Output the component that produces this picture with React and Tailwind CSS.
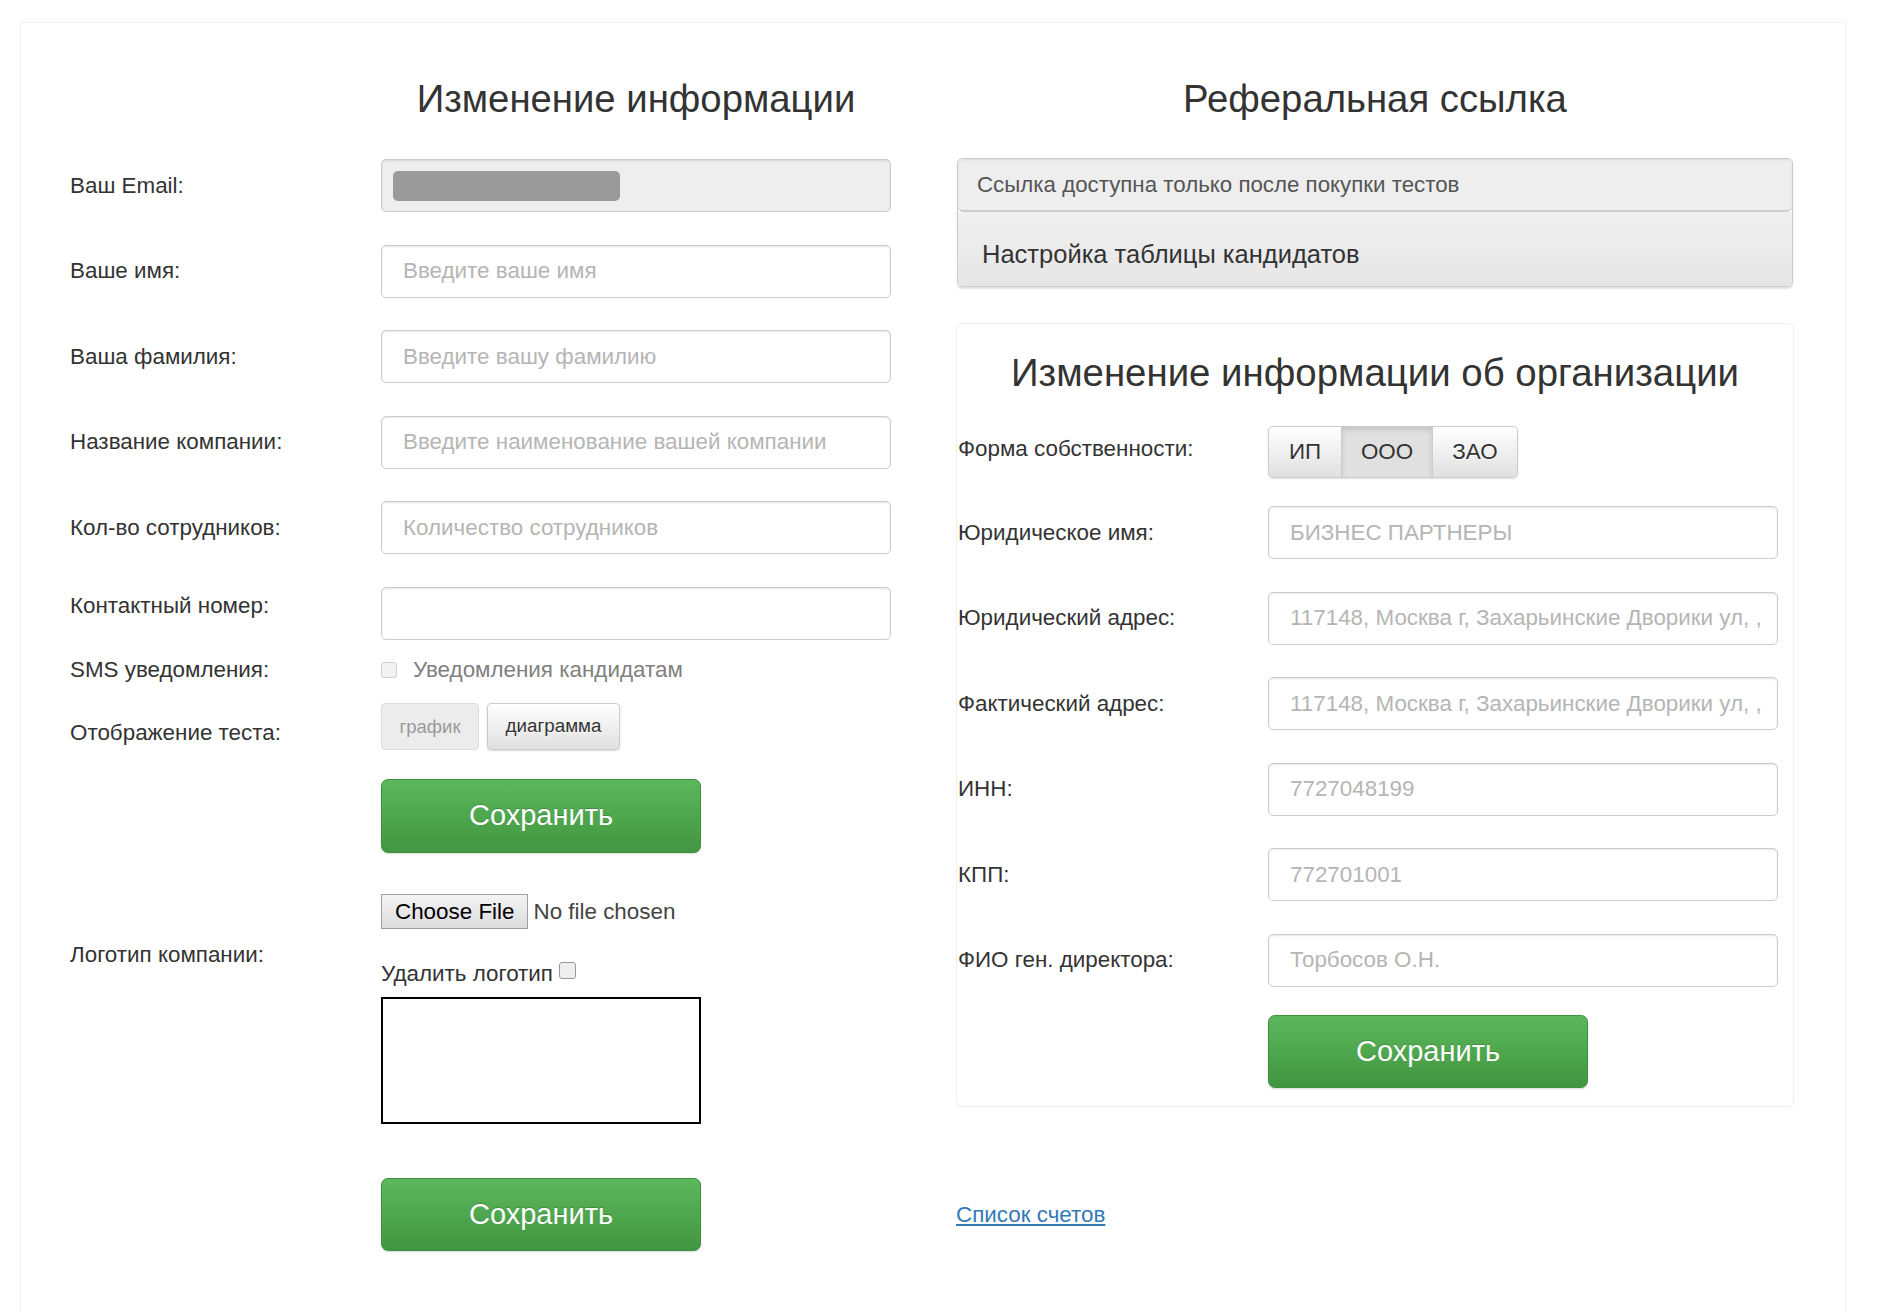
import React from "react";

const Field = ({ text, w = "w-[510px]", bg = "bg-white", children }) => (
  <div
    className={`${w} h-[53px] ${bg} border border-[#ccc] rounded-[5px] shadow-[inset_0_1px_2px_rgba(0,0,0,0.1)] flex items-center px-[21px] overflow-hidden whitespace-nowrap text-[22.4px] text-[#b5b5b5]`}
  >
    {children ?? text}
  </div>
);

const Row = ({ label, labelW = "w-[311px]", labelClass = "", children }) => (
  <div className="flex items-center h-[53px]">
    <div className={`${labelW} shrink-0 text-[22.4px] text-[#333] ${labelClass}`}>{label}</div>
    {children}
  </div>
);

const GreenBtn = ({ h = "h-[74px]" }) => (
  <button className={`w-[320px] ${h} rounded-[7px] border border-[#3e8f3e] bg-gradient-to-b from-[#5cb85c] to-[#419641] text-white text-[29px] [text-shadow:0_-1px_0_rgba(0,0,0,0.2)] shadow-[0_1px_2px_rgba(0,0,0,0.15)]`}>
    Сохранить
  </button>
);

export default function App() {
  return (
    <div className="min-h-[1312px] bg-white pt-[22px] pl-[20px] font-['Liberation_Sans',Arial,sans-serif] text-[#333]">
      <div className="w-[1826px] min-h-[1290px] border border-b-0 border-[#f0f0f0] flex">
        {/* LEFT COLUMN */}
        <div className="w-[935px] shrink-0 pl-[49px] pt-[53px]">
          <h2 className="ml-[311px] w-[510px] text-center text-[38.3px] leading-[46px] text-[#333]">
            Изменение информации
          </h2>
          <div className="mt-[37px] flex flex-col gap-[32.5px]">
            <Row label="Ваш Email:">
              <div className="w-[510px] h-[53px] bg-[#eee] border border-[#ccc] rounded-[5px] shadow-[inset_0_1px_2px_rgba(0,0,0,0.1)] flex items-center pl-[11px]">
                <div className="w-[227px] h-[30px] rounded-[5px] bg-[#9a9a9a]" />
              </div>
            </Row>
            <Row label="Ваше имя:">
              <Field text="Введите ваше имя" />
            </Row>
            <Row label="Ваша фамилия:">
              <Field text="Введите вашу фамилию" />
            </Row>
            <Row label="Название компании:">
              <Field text="Введите наименование вашей компании" />
            </Row>
            <Row label="Кол-во сотрудников:">
              <Field text="Количество сотрудников" />
            </Row>
            <Row label="Контактный номер:" labelClass="-mt-[14px]">
              <Field text="" />
            </Row>
          </div>

          <div className="mt-[15.5px] flex items-center h-[30px]">
            <div className="w-[311px] shrink-0 text-[22.4px]">SMS уведомления:</div>
            <span className="w-[16px] h-[16px] rounded-[3px] border border-[#d0d0d0] bg-[#f2f2f2]" />
            <span className="ml-[16px] text-[22.4px] text-[#808080]">Уведомления кандидатам</span>
          </div>

          <div className="mt-[18px] flex items-start">
            <div className="w-[311px] shrink-0 text-[22.4px] leading-[30px] pt-[15px]">Отображение теста:</div>
            <div className="flex gap-[8px]">
              <button className="w-[98px] h-[47px] rounded-[4px] border border-[#ddd] bg-[#ececec] text-[18.5px] text-[#999]">
                график
              </button>
              <button className="w-[133px] h-[47px] rounded-[4px] border border-[#ccc] bg-gradient-to-b from-white to-[#e0e0e0] text-[18.8px] text-[#333] shadow-[0_1px_2px_rgba(0,0,0,0.15)] [text-shadow:0_1px_0_#fff]">
                диаграмма
              </button>
            </div>
          </div>

          <div className="mt-[29px] ml-[311px]">
            <GreenBtn />
          </div>

          <div className="mt-[41px] flex items-start">
            <div className="w-[311px] shrink-0 text-[22.4px] leading-[30px] pt-[46px]">Логотип компании:</div>
            <div className="flex flex-col">
              <div className="flex items-center h-[35px]">
                <span className="h-[35px] px-[13px] flex items-center border border-[#a0a0a0] bg-gradient-to-b from-[#f4f4f4] to-[#dcdcdc] text-[22.4px] text-black">
                  Choose File
                </span>
                <span className="ml-[5px] text-[22.4px] text-[#444]">No file chosen</span>
              </div>
              <div className="mt-[32px] flex items-start h-[26px]">
                <span className="text-[22.4px] leading-[26px] text-[#333]">Удалить логотип</span>
                <span className="ml-[6px] mt-[1px] w-[17px] h-[17px] rounded-[3px] border border-[#999] bg-[#eee]" />
              </div>
              <div className="mt-[10px] w-[320px] h-[127px] border-2 border-black bg-white" />
            </div>
          </div>

          <div className="mt-[54px] ml-[311px] pb-[40px]">
            <GreenBtn h="h-[73px]" />
          </div>
        </div>

        {/* RIGHT COLUMN */}
        <div className="w-[838px] shrink-0 pt-[53px]">
          <h2 className="text-center text-[38.3px] leading-[46px] text-[#333]">Реферальная ссылка</h2>

          <div className="mt-[36px] mx-[1px] rounded-[5px] border border-[#ccc] shadow-[0_2px_2px_rgba(0,0,0,0.12)] overflow-hidden">
            <div className="h-[53px] bg-[#eee] border-b-2 border-[#cdcdcd] rounded-[5px] flex items-center pl-[19px] text-[22.3px] text-[#555] shadow-[inset_0_1px_2px_rgba(0,0,0,0.08)]">
              Ссылка доступна только после покупки тестов
            </div>
            <div className="h-[74px] bg-gradient-to-b from-[#f0f0f0] to-[#e6e6e6] flex items-center pl-[24px] pt-[10px] text-[25.5px] text-[#333]">
              Настройка таблицы кандидатов
            </div>
          </div>

          <div className="mt-[36px] border border-[#f0f0f0] rounded-[5px] pl-[1px] pr-[13px] pt-[26px] pb-[18px]">
            <h2 className="-mr-[12px] text-center text-[38.4px] leading-[46px] text-[#333]">
              Изменение информации об организации
            </h2>

            <div className="mt-[30px] flex items-center h-[52px]">
              <div className="w-[310px] shrink-0 text-[22.4px] -mt-[6px]">Форма собственности:</div>
              <div className="flex h-[52px] rounded-[5px] shadow-[0_1px_2px_rgba(0,0,0,0.12)]">
                <button className="w-[74px] h-[52px] rounded-l-[5px] border border-[#ccc] bg-gradient-to-b from-white to-[#e0e0e0] text-[22.4px] text-[#333] [text-shadow:0_1px_0_#fff]">
                  ИП
                </button>
                <button className="w-[92px] h-[52px] -ml-px border border-[#ccc] bg-[#e0e0e0] shadow-[inset_0_3px_5px_rgba(0,0,0,0.125)] text-[22.4px] text-[#333]">
                  ООО
                </button>
                <button className="w-[86px] h-[52px] -ml-px rounded-r-[5px] border border-[#ccc] bg-gradient-to-b from-white to-[#e0e0e0] text-[22.4px] text-[#333] [text-shadow:0_1px_0_#fff]">
                  ЗАО
                </button>
              </div>
            </div>

            <div className="mt-[28px] flex flex-col gap-[32.5px]">
              <Row label="Юридическое имя:" labelW="w-[310px]">
                <Field w="w-[510px]" text="БИЗНЕС ПАРТНЕРЫ" />
              </Row>
              <Row label="Юридический адрес:" labelW="w-[310px]">
                <Field w="w-[510px]" text="117148, Москва г, Захарьинские Дворики ул, ," />
              </Row>
              <Row label="Фактический адрес:" labelW="w-[310px]">
                <Field w="w-[510px]" text="117148, Москва г, Захарьинские Дворики ул, ," />
              </Row>
              <Row label="ИНН:" labelW="w-[310px]">
                <Field w="w-[510px]" text="7727048199" />
              </Row>
              <Row label="КПП:" labelW="w-[310px]">
                <Field w="w-[510px]" text="772701001" />
              </Row>
              <Row label="ФИО ген. директора:" labelW="w-[310px]">
                <Field w="w-[510px]" text="Торбосов О.Н." />
              </Row>
            </div>

            <div className="mt-[28.5px] ml-[310px]">
              <GreenBtn h="h-[73px]" />
            </div>
          </div>

          <div className="mt-[95px]">
            <a href="#" className="text-[22.4px] leading-[26px] text-[#337ab7] underline">
              Список счетов
            </a>
          </div>
        </div>
      </div>
    </div>
  );
}
